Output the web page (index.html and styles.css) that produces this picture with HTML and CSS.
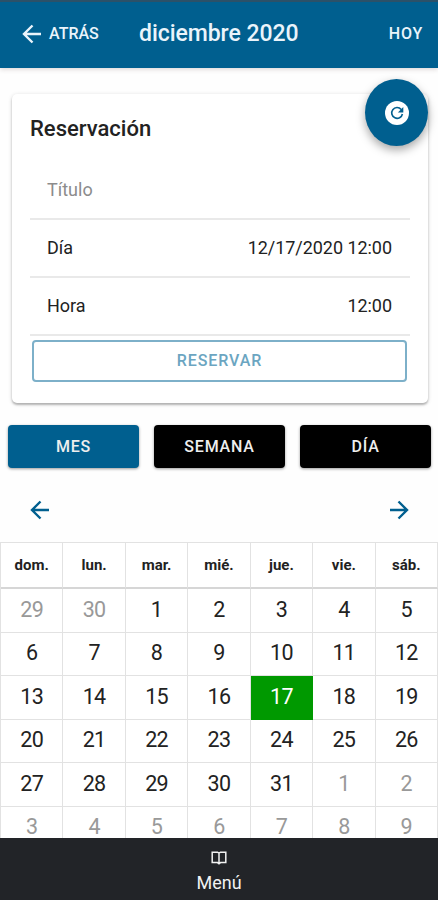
FILE: index.html
```html
<!DOCTYPE html>
<html lang="es">
<head>
<meta charset="utf-8">
<title>Reservación</title>
<link rel="stylesheet" href="styles.css">
</head>
<body>
<div class="app">
  <header class="toolbar">
    <div class="back">
      <svg class="arrow" viewBox="0 0 20 20"><path d="M10.5 1.5 2 10 10.5 18.5M2 10H19"/></svg>
      <span>ATRÁS</span>
    </div>
    <h1 class="title">diciembre 2020</h1>
    <span class="today">HOY</span>
  </header>

  <main class="content">
    <section class="card">
      <h2 class="card-title">Reservación</h2>
      <div class="item placeholder"><span>Título</span></div>
      <div class="item"><span>Día</span><span class="value">12/17/2020 12:00</span></div>
      <div class="item"><span>Hora</span><span class="value">12:00</span></div>
      <div class="reserve">RESERVAR</div>
    </section>

    <div class="modes">
      <div class="mode active">MES</div>
      <div class="mode">SEMANA</div>
      <div class="mode">DÍA</div>
    </div>

    <div class="pager">
      <svg class="arrow" viewBox="0 0 20 20"><path d="M10.5 1.5 2 10 10.5 18.5M2 10H19"/></svg>
      <svg class="arrow" viewBox="0 0 20 20"><path d="M9.5 1.5 18 10 9.5 18.5M18 10H1"/></svg>
    </div>

    <div class="calendar">
      <b>dom.</b><b>lun.</b><b>mar.</b><b>mié.</b><b>jue.</b><b>vie.</b><b>sáb.</b>
      <i class="out">29</i><i class="out">30</i><i>1</i><i>2</i><i>3</i><i>4</i><i>5</i>
      <i>6</i><i>7</i><i>8</i><i>9</i><i>10</i><i>11</i><i>12</i>
      <i>13</i><i>14</i><i>15</i><i>16</i><i class="selected">17</i><i>18</i><i>19</i>
      <i>20</i><i>21</i><i>22</i><i>23</i><i>24</i><i>25</i><i>26</i>
      <i>27</i><i>28</i><i>29</i><i>30</i><i>31</i><i class="out">1</i><i class="out">2</i>
      <i class="out">3</i><i class="out">4</i><i class="out">5</i><i class="out">6</i><i class="out">7</i><i class="out">8</i><i class="out">9</i>
    </div>
  </main>

  <footer class="tabbar">
    <svg class="book" viewBox="0 0 16 14"><path d="M8 2.2 6.5 1.2H1.2V11.6H6.5L8 12.8 9.5 11.6H14.8V1.2H9.5ZM8 2.2V12.8"/></svg>
    <span>Menú</span>
  </footer>

  <div class="fab">
    <svg class="refresh" viewBox="0 0 24 24"><circle cx="12" cy="12" r="12"/><path class="arc" d="M16.2 8.4A5.4 5.4 0 1 0 17.4 13"/><path class="tip" d="M18.3 6V11.4H12.9Z"/></svg>
  </div>
</div>
</body>
</html>
```
FILE: styles.css
```css
* { box-sizing: border-box; }

body {
  margin: 0;
  background: #fefefe;
  color: #222;
  font-family: Roboto, "Liberation Sans", sans-serif;
}

.app {
  position: relative;
  display: flex;
  flex-direction: column;
  width: 438px;
  height: 900px;
  overflow: hidden;
}

.toolbar {
  flex: none;
  display: grid;
  grid-template-columns: 139px 1fr auto;
  align-items: center;
  height: 68px;
  padding: 0 15px 3px 0;
  border-top: 2px solid #2b5169;
  background: #005f8f;
  color: #eaf4fb;
  box-shadow: 0 1px 5px rgba(60, 30, 30, 0.2);
}

.back {
  display: flex;
  align-items: center;
  gap: 7px;
  padding-left: 22px;
  font-size: 16px;
  font-weight: 500;
}

.arrow {
  width: 20px;
  height: 20px;
  fill: none;
  stroke: currentColor;
  stroke-width: 2.4;
}

.title {
  margin: 0;
  font-size: 23px;
  font-weight: 500;
  letter-spacing: -0.05px;
}

.today {
  font-size: 16px;
  font-weight: 500;
  letter-spacing: 0.8px;
}

.content {
  flex: 1;
  min-height: 0;
  overflow: hidden;
}

.card {
  height: 309px;
  margin: 26px 10px 0 12px;
  padding: 21px 18px 0;
  border-radius: 5px;
  background: #fff;
  box-shadow: 0 2px 2px rgba(0, 0, 0, 0.22), 0 1px 4px rgba(0, 0, 0, 0.16);
}

.card-title {
  margin: 0 0 19px;
  font-size: 22px;
  font-weight: 500;
  line-height: 28px;
}

.item {
  display: flex;
  align-items: center;
  justify-content: space-between;
  height: 58px;
  padding: 0 18px 2px 17px;
  border-bottom: 2px solid #e9e9e9;
  font-size: 18px;
}

.placeholder { color: #8c8c8c; }

.value { letter-spacing: -0.05px; }

.reserve {
  display: flex;
  align-items: center;
  justify-content: center;
  height: 42px;
  margin: 4px 3px 0 2px;
  padding-bottom: 1px;
  border: 2px solid #7db0c9;
  border-radius: 4px;
  color: #6ba5c1;
  font-size: 16px;
  font-weight: 500;
  letter-spacing: 0.9px;
}

.modes {
  display: grid;
  grid-template-columns: repeat(3, 1fr);
  gap: 15px;
  margin: 22px 7px 0 8px;
}

.mode {
  display: flex;
  align-items: center;
  justify-content: center;
  height: 43px;
  padding-bottom: 1px;
  border-radius: 4px;
  background: #000;
  color: #eee;
  box-shadow: 0 1px 3px rgba(0, 0, 0, 0.4);
  font-size: 16px;
  font-weight: 500;
  letter-spacing: 0.8px;
}

.active { background: #005f8f; }

.pager {
  display: flex;
  align-items: center;
  justify-content: space-between;
  height: 74px;
  padding: 10px 29px 0 30px;
  color: #005f8f;
}

.calendar {
  display: grid;
  grid-template-columns: repeat(7, 1fr);
  grid-template-rows: 46px repeat(6, 43.5px);
  border-top: 1px solid #e2e2e2;
  border-left: 1px solid #e2e2e2;
  background: #fff;
}

.calendar > * {
  display: flex;
  align-items: center;
  justify-content: center;
  padding-bottom: 1px;
  border-right: 1px solid #e2e2e2;
  border-bottom: 1px solid #e2e2e2;
  font-size: 21.5px;
  font-style: normal;
  line-height: 18px;
  letter-spacing: -0.7px;
}

.calendar > b {
  padding: 0;
  border-bottom: 2px solid #d6d6d6;
  font-size: 15px;
  font-weight: 700;
  letter-spacing: 0;
}

.calendar > .out { color: #999; }

.calendar > .selected {
  border-color: #009900;
  background: #009900;
  color: #fff;
}

.tabbar {
  flex: none;
  display: flex;
  flex-direction: column;
  align-items: center;
  height: 62px;
  padding-top: 13px;
  background: #222428;
  color: #f2f2f2;
  font-size: 18px;
  line-height: 24px;
}

.book {
  width: 16px;
  height: 14px;
  margin-bottom: 6px;
  fill: none;
  stroke: currentColor;
  stroke-width: 1.5;
}

.fab {
  position: absolute;
  top: 79px;
  left: 365px;
  display: flex;
  align-items: center;
  justify-content: center;
  width: 63px;
  height: 67px;
  border-radius: 50%;
  background: #005f8f;
  box-shadow: 0 4px 10px rgba(0, 0, 0, 0.35);
}

.refresh {
  width: 24px;
  height: 24px;
  fill: #fff;
}

.arc {
  fill: none;
  stroke: #005f8f;
  stroke-width: 1.6;
}

.tip { fill: #005f8f; }
```
